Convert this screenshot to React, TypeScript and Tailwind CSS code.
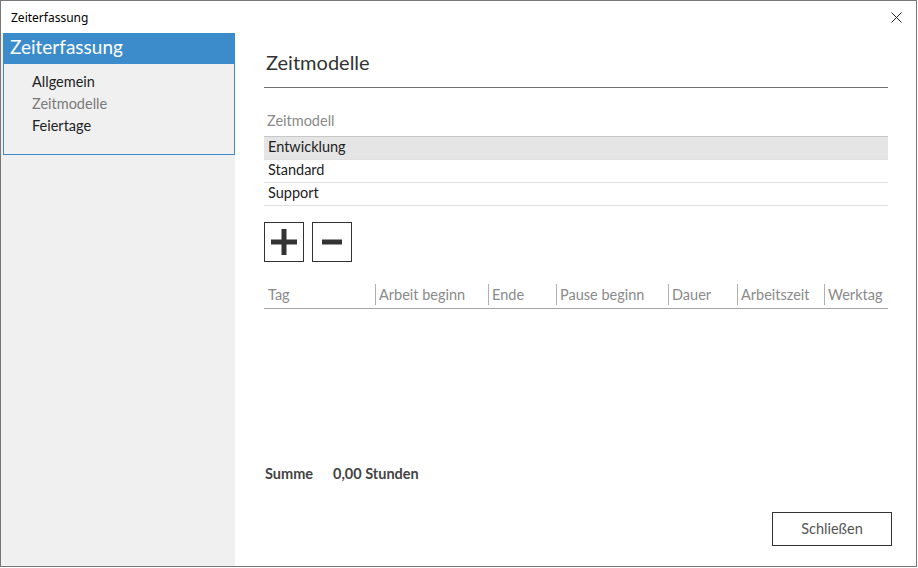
import { useState } from "react";

const menu = [
  { label: "Allgemein", active: false },
  { label: "Zeitmodelle", active: true },
  { label: "Feiertage", active: false },
];

const models = ["Entwicklung", "Standard", "Support"];

const columns = [
  { label: "Tag", w: "w-[111px]" },
  { label: "Arbeit beginn", w: "w-[113px]" },
  { label: "Ende", w: "w-[68px]" },
  { label: "Pause beginn", w: "w-[112px]" },
  { label: "Dauer", w: "w-[69px]" },
  { label: "Arbeitszeit", w: "w-[87px]" },
  { label: "Werktag", w: "flex-1" },
];

const App = () => {
  const [selected, setSelected] = useState(0);
  return (
    <div className="w-[918px] h-[568px] bg-white font-['Lato','Noto_Sans',sans-serif]">
      <div className="w-[917px] h-[567px] border border-[#777] flex flex-col">
        <div className="h-[32px] flex flex-row items-center justify-between pl-[10px] pr-[14px] shrink-0">
          <span className="text-[12px] text-black font-['Noto_Sans',sans-serif] mt-[1px]">Zeiterfassung</span>
          <svg width="11" height="11" viewBox="0 0 11 11" className="mt-[1px]">
            <path d="M0.5 0.5 L10.5 10.5 M10.5 0.5 L0.5 10.5" stroke="#222" strokeWidth="1" />
          </svg>
        </div>
        <div className="flex flex-row flex-1 min-h-0">
          <div className="w-[234px] bg-[#f0f0f0] pl-[2px] shrink-0">
            <div className="border border-[#3c8ccc] border-t-0">
              <div className="h-[31px] bg-[#3c8ccc] text-white text-[19px] pl-[6px] leading-[28px]">
                Zeiterfassung
              </div>
              <div className="flex flex-col pl-[28px] pt-[7px] pb-[17px] text-[14.5px]">
                {menu.map((m) => (
                  <div
                    key={m.label}
                    className={`h-[22px] leading-[22px] ${m.active ? "text-[#7a7a7a]" : "text-[#222]"}`}
                  >
                    {m.label}
                  </div>
                ))}
              </div>
            </div>
          </div>
          <div className="flex-1 flex flex-col pl-[29px] pr-[28px]">
            <div className="pt-[17px] pb-[13px] border-b border-[#707070] text-[20px] text-[#333] pl-[2px] leading-[24px]">
              Zeitmodelle
            </div>
            <div className="mt-[22px] text-[14.5px] text-[#8a8a8a] pl-[3px] h-[27px] leading-[22px] border-b border-[#c8c8c8]">
              Zeitmodell
            </div>
            {models.map((m, i) => (
              <div
                key={m}
                onClick={() => setSelected(i)}
                className={`h-[23px] leading-[20px] pl-[4px] text-[14.5px] text-[#222] border-b border-[#e0e0e0] cursor-default ${
                  i === selected ? "bg-[#e5e5e5]" : ""
                }`}
              >
                {m}
              </div>
            ))}
            <div className="flex flex-row gap-[8px] mt-[16px]">
              <button className="w-[40px] h-[40px] border border-[#333] flex items-center justify-center">
                <svg width="26" height="26" viewBox="0 0 26 26">
                  <rect x="10.5" y="0" width="5" height="26" fill="#333" />
                  <rect x="0" y="10.5" width="26" height="5" fill="#333" />
                </svg>
              </button>
              <button className="w-[40px] h-[40px] border border-[#333] flex items-center justify-center">
                <svg width="20" height="6" viewBox="0 0 20 6">
                  <rect x="0" y="0.5" width="20" height="5" fill="#333" />
                </svg>
              </button>
            </div>
            <div className="flex flex-row mt-[22px] border-b border-[#a8a8a8] h-[25px] pb-[3px]">
              {columns.map((c, i) => (
                <div
                  key={c.label}
                  className={`${c.w} text-[14.5px] text-[#8a8a8a] leading-[21px] ${
                    i > 0 ? "border-l border-[#b0b0b0] pl-[3px]" : "pl-[4px]"
                  }`}
                >
                  {c.label}
                </div>
              ))}
            </div>
            <div className="flex-1" />
            <div className="flex flex-row gap-[20px] pl-[1px] text-[14.5px] font-bold text-[#444] mb-[27px]">
              <span>Summe</span>
              <span>0,00 Stunden</span>
            </div>
            <div className="flex flex-row justify-end -mr-[4px] mb-[20px]">
              <button className="w-[120px] h-[34px] border border-[#333] text-[14.5px] text-[#555]">
                Schließen
              </button>
            </div>
          </div>
        </div>
      </div>
    </div>
  );
};

export default App;
